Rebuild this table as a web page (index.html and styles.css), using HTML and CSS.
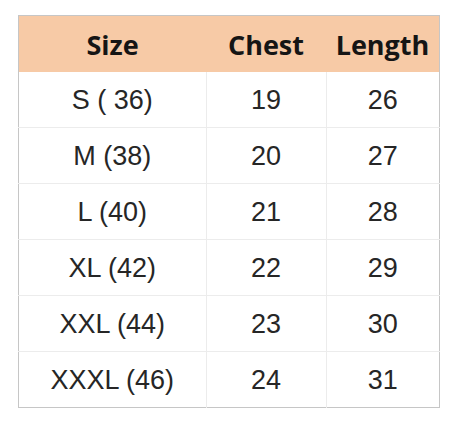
FILE: index.html
```html
<!DOCTYPE html>
<html>
<head>
<meta charset="utf-8">
<link rel="stylesheet" href="styles.css">
</head>
<body>
<div class="wrap">
<table class="chart">
  <thead>
    <tr><th class="c1">Size</th><th class="c2">Chest</th><th class="c3">Length</th></tr>
  </thead>
  <tbody>
    <tr><td>S ( 36)</td><td>19</td><td>26</td></tr>
    <tr><td>M (38)</td><td>20</td><td>27</td></tr>
    <tr><td>L (40)</td><td>21</td><td>28</td></tr>
    <tr><td>XL (42)</td><td>22</td><td>29</td></tr>
    <tr><td>XXL (44)</td><td>23</td><td>30</td></tr>
    <tr><td>XXXL (46)</td><td>24</td><td>31</td></tr>
  </tbody>
</table>
</div>
</body>
</html>
```

FILE: styles.css
```css
html, body {
  margin: 0;
  padding: 0;
  background: #ffffff;
}
.wrap {
  padding: 15px 0 0 18px;
}
.chart {
  border-collapse: collapse;
  border: 1px solid #c6c6c6;
  color: #1a1a1a;
  table-layout: fixed;
  width: 420px;
}
.chart th {
  background: #f7caa6;
  font-family: "Open Sans", "Liberation Sans", sans-serif;
  font-weight: 700;
  font-size: 27px;
  height: 56px;
  padding: 0;
  text-align: center;
  color: #151515;
}
.chart .c1 { width: 187px; }
.chart .c2 { width: 120px; }
.chart .c3 { width: 113px; }
.chart td {
  font-family: "Liberation Sans", Arial, sans-serif;
  font-size: 27px;
  height: 53px;
  padding: 2px 0 0;
  text-align: center;
  border-top: 1px solid #ececec;
  border-left: 1px solid #ececec;
  color: #262626;
}
.chart td:first-child { border-left: none; }
.chart tbody tr:first-child td { border-top: none; }
```
